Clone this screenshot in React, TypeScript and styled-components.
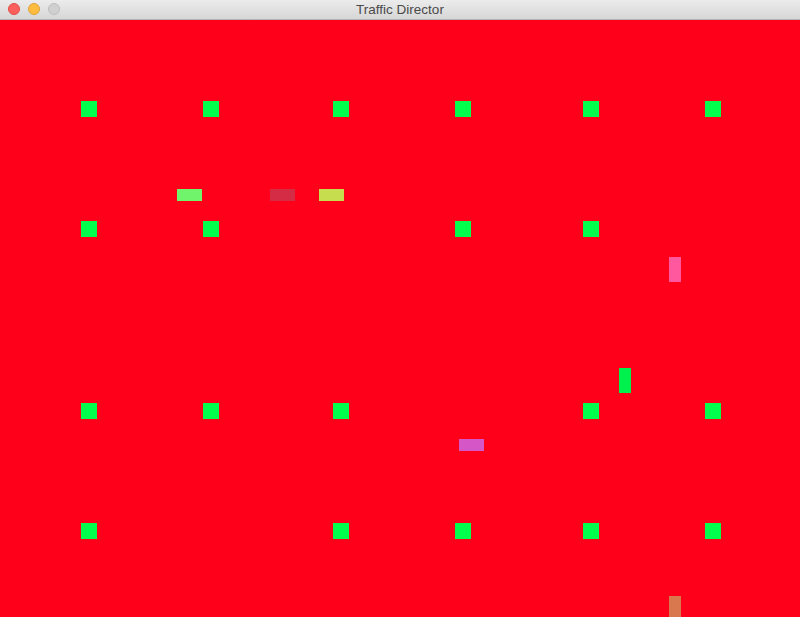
import React from "react";
import styled, { createGlobalStyle } from "styled-components";

const Global = createGlobalStyle`
  html, body { margin: 0; padding: 0; overflow: hidden; }
  body { font-family: "Liberation Sans", Arial, sans-serif; }
`;

const Window = styled.div`
  width: 800px;
  height: 617px;
  display: flex;
  flex-direction: column;
  overflow: hidden;
`;

const TitleBar = styled.div`
  position: relative;
  height: 19px;
  flex: 0 0 19px;
  background: linear-gradient(#ececec, #d6d6d6);
  border-bottom: 1px solid #b3b3b3;
  display: flex;
  align-items: center;
  justify-content: center;
`;

const Lights = styled.div`
  position: absolute;
  left: 8px;
  top: 3px;
  display: flex;
  gap: 8px;
`;

const Light = styled.span<{ $c: string; $b: string }>`
  width: 12px;
  height: 12px;
  box-sizing: border-box;
  border-radius: 50%;
  background: ${(p) => p.$c};
  border: 1px solid ${(p) => p.$b};
`;

const Title = styled.span`
  font-size: 13.5px;
  color: #4a4a4a;
  line-height: 19px;
`;

const Canvas = styled.div`
  position: relative;
  flex: 1;
  background: #ff001b;
`;

const Block = styled.div<{ $x: number; $y: number; $w: number; $h: number; $c: string }>`
  position: absolute;
  left: ${(p) => p.$x}px;
  top: ${(p) => p.$y - 20}px;
  width: ${(p) => p.$w}px;
  height: ${(p) => p.$h}px;
  background: ${(p) => p.$c};
`;

const cols = [81, 203, 333, 455, 583, 705];
const rows: [number, number[]][] = [
  [101, [0, 1, 2, 3, 4, 5]],
  [221, [0, 1, 3, 4]],
  [403, [0, 1, 2, 4, 5]],
  [523, [0, 2, 3, 4, 5]],
];

const cars = [
  { x: 177, y: 189, w: 25, h: 12, c: "#70f46c" },
  { x: 270, y: 189, w: 25, h: 12, c: "#d52c46" },
  { x: 319, y: 189, w: 25, h: 12, c: "#c6de4e" },
  { x: 669, y: 257, w: 12, h: 25, c: "#ff589e" },
  { x: 619, y: 368, w: 12, h: 25, c: "#00f04e" },
  { x: 459, y: 439, w: 25, h: 12, c: "#d556c6" },
  { x: 669, y: 596, w: 12, h: 25, c: "#d9784f" },
];

export default function App() {
  return (
    <>
      <Global />
      <Window>
        <TitleBar>
          <Lights>
            <Light $c="#fc605c" $b="#e24b47" />
            <Light $c="#fdbc40" $b="#e0a438" />
            <Light $c="#d0d0d0" $b="#bdbdbd" />
          </Lights>
          <Title>Traffic Director</Title>
        </TitleBar>
        <Canvas>
          {rows.flatMap(([y, idx]) =>
            idx.map((i) => (
              <Block key={`${y}-${i}`} $x={cols[i]} $y={y} $w={16} $h={16} $c="#00ff4c" />
            ))
          )}
          {cars.map((c, i) => (
            <Block key={`car-${i}`} $x={c.x} $y={c.y} $w={c.w} $h={c.h} $c={c.c} />
          ))}
        </Canvas>
      </Window>
    </>
  );
}
